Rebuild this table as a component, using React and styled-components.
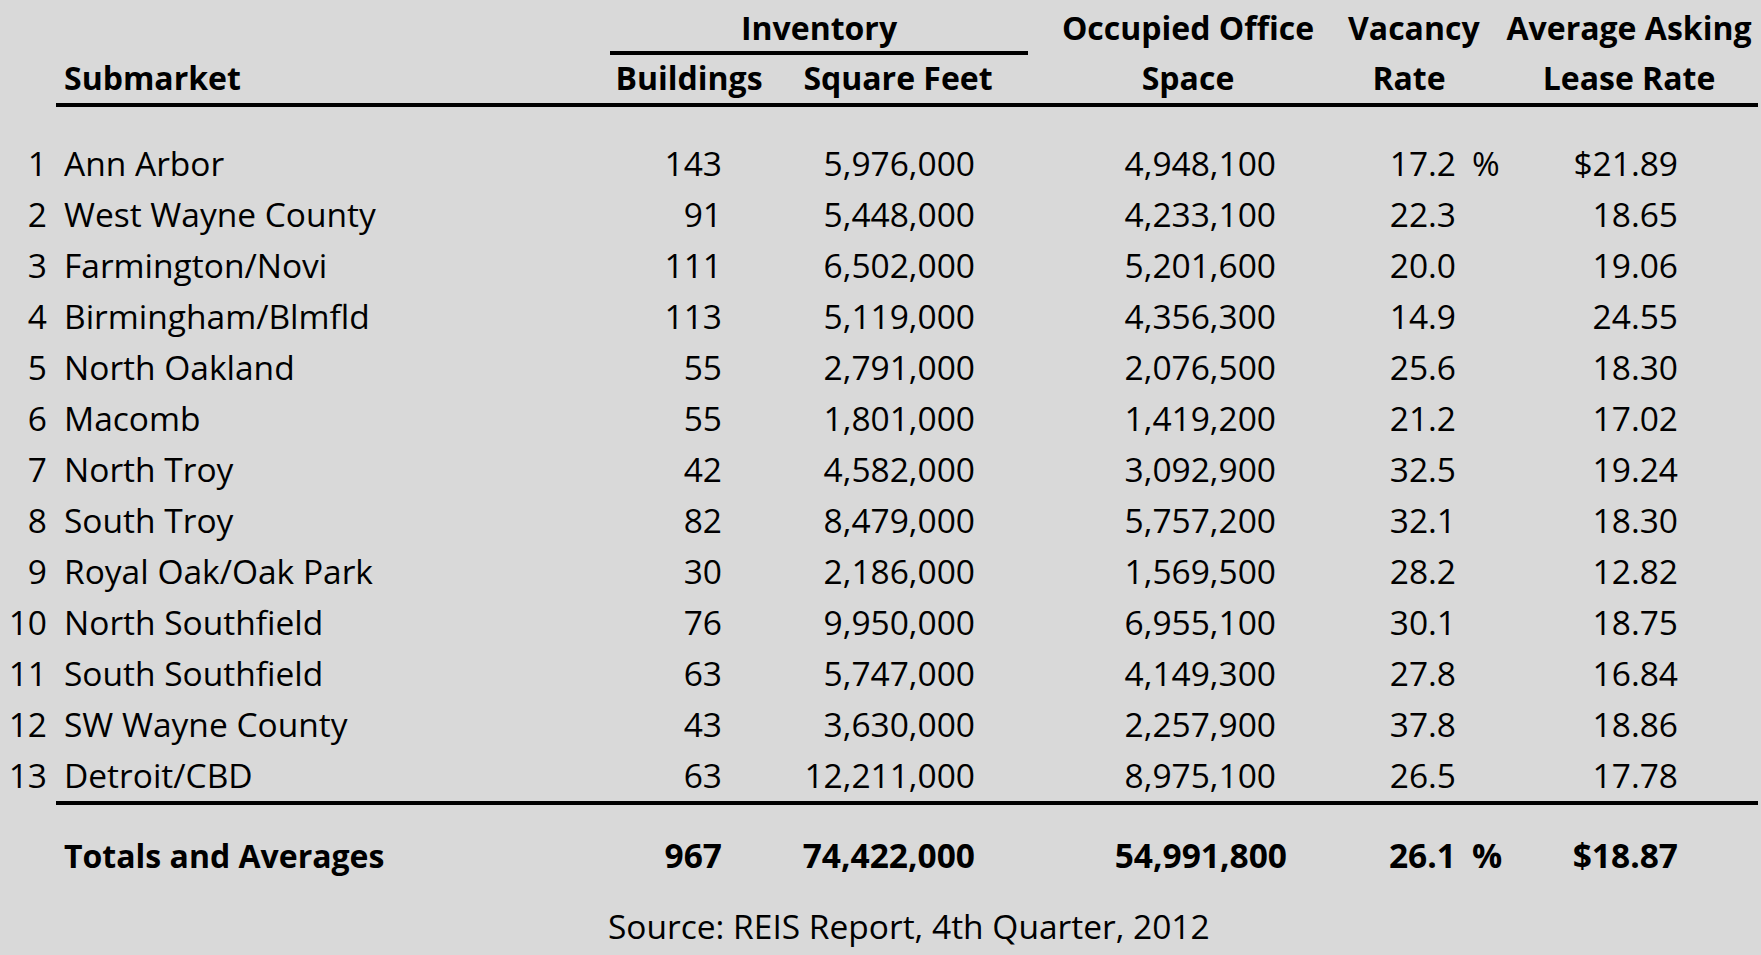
import React from 'react';
import styled, { createGlobalStyle } from 'styled-components';

const GlobalStyle = createGlobalStyle`
    html, body {
        margin: 0;
        padding: 0;
        background: #d9d9d9;
    }
    body {
        font-family: "Open Sans", "Noto Sans", "Liberation Sans", sans-serif;
        color: #000;
    }
`;

// num | name | buildings | square feet | occupied | vacancy | % | lease
const columns = '56px 554px 158px 260px 320px 122px 30px 258px';

const Sheet = styled.div`
    width: 1761px;
    min-height: 955px;
    background: #d9d9d9;
`;

const Head = styled.div`
    display: grid;
    grid-template-columns: ${columns};
    font-weight: 700;
    font-size: 32px;
`;

const TopCell = styled.div`
    grid-row: 1;
    grid-column: ${p => p.col};
    padding-top: 4px;
    line-height: 47px;
    text-align: center;
    white-space: nowrap;
    ${p => p.underline && 'border-bottom: 4px solid #000;'}
`;

const SubCell = styled.div`
    grid-row: 2;
    padding-top: 8px;
    padding-bottom: 10px;
    line-height: 30px;
    white-space: nowrap;
    text-align: ${p => p.left ? 'left' : 'center'};
    padding-left: ${p => p.left ? '8px' : '0'};
    border-bottom: 4px solid #000;
`;

const Body = styled.div`
    display: grid;
    grid-template-columns: ${columns};
    font-size: 33.5px;
    line-height: 51px;
    padding-top: 31px;
`;

const Row = styled.div`
    display: contents;
    font-weight: ${p => p.total ? 700 : 400};
`;

const Num = styled.div`
    text-align: right;
    padding-right: 9px;
    white-space: nowrap;
`;

const Name = styled.div`
    padding-left: 8px;
    white-space: nowrap;
    font-size: ${p => p.total ? '32px' : 'inherit'};
`;

const Value = styled.div`
    text-align: right;
    padding-right: ${p => p.pr}px;
    white-space: nowrap;
`;

const Pct = styled.div`
    padding-left: 2px;
    white-space: nowrap;
`;

const Rule = styled.div`
    grid-column: 2 / -1;
    height: 4px;
    background: #000;
    margin-bottom: 25px;
`;

const Source = styled.p`
    margin: 20px 0 0;
    padding-left: 608px;
    font-size: 33.5px;
    line-height: 51px;
`;

const rows = [
    ['Ann Arbor', '143', '5,976,000', '4,948,100', '17.2', '%', '$21.89'],
    ['West Wayne County', '91', '5,448,000', '4,233,100', '22.3', '', '18.65'],
    ['Farmington/Novi', '111', '6,502,000', '5,201,600', '20.0', '', '19.06'],
    ['Birmingham/Blmfld', '113', '5,119,000', '4,356,300', '14.9', '', '24.55'],
    ['North Oakland', '55', '2,791,000', '2,076,500', '25.6', '', '18.30'],
    ['Macomb', '55', '1,801,000', '1,419,200', '21.2', '', '17.02'],
    ['North Troy', '42', '4,582,000', '3,092,900', '32.5', '', '19.24'],
    ['South Troy', '82', '8,479,000', '5,757,200', '32.1', '', '18.30'],
    ['Royal Oak/Oak Park', '30', '2,186,000', '1,569,500', '28.2', '', '12.82'],
    ['North Southfield', '76', '9,950,000', '6,955,100', '30.1', '', '18.75'],
    ['South Southfield', '63', '5,747,000', '4,149,300', '27.8', '', '16.84'],
    ['SW Wayne County', '43', '3,630,000', '2,257,900', '37.8', '', '18.86'],
    ['Detroit/CBD', '63', '12,211,000', '8,975,100', '26.5', '', '17.78'],
];

const DataRow = ({ num, cells, total }) => {
    const [name, bldg, sqft, occ, vac, pct, lease] = cells;
    return (
        <Row total={total}>
            <Num>{num}</Num>
            <Name total={total}>{name}</Name>
            <Value pr={46}>{bldg}</Value>
            <Value pr={53}>{sqft}</Value>
            <Value pr={total ? 61 : 72}>{occ}</Value>
            <Value pr={14}>{vac}</Value>
            <Pct>{pct}</Pct>
            <Value pr={80}>{lease}</Value>
        </Row>
    );
};

export default function App() {
    return (
        <Sheet>
            <GlobalStyle />
            <Head>
                <TopCell col="3 / 5" underline>Inventory</TopCell>
                <TopCell col="5">Occupied Office</TopCell>
                <TopCell col="6">Vacancy</TopCell>
                <TopCell col="8">Average Asking</TopCell>

                <div style={{ gridRow: 2 }} />
                <SubCell left>Submarket</SubCell>
                <SubCell>Buildings</SubCell>
                <SubCell>Square Feet</SubCell>
                <SubCell>Space</SubCell>
                <SubCell>Rate</SubCell>
                <SubCell />
                <SubCell>Lease Rate</SubCell>
            </Head>

            <Body>
                {rows.map((r, i) => <DataRow key={i} num={i + 1} cells={r} />)}
                <Rule />
                <DataRow
                    total
                    num=""
                    cells={['Totals and Averages', '967', '74,422,000', '54,991,800', '26.1', '%', '$18.87']}
                />
            </Body>

            <Source>Source: REIS Report, 4th Quarter, 2012</Source>
        </Sheet>
    );
}
